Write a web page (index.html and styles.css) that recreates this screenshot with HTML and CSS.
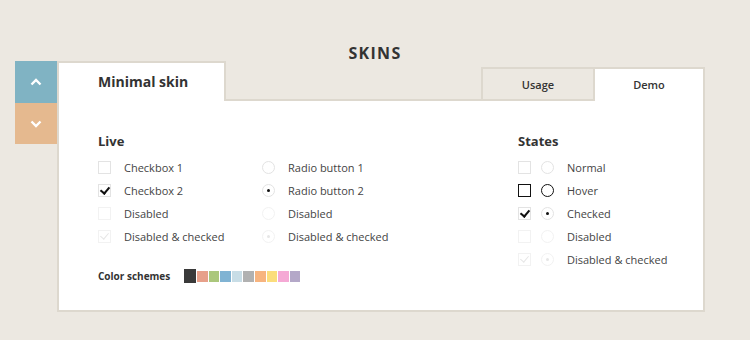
FILE: index.html
```html
<!DOCTYPE html>
<html lang="en">
<head>
    <meta charset="UTF-8">
    <title>Skins</title>
    <link rel="stylesheet" href="styles.css">
</head>
<body>
    <h1 class="title">SKINS</h1>

    <div class="wrap">
        <div class="side">
            <div class="side-btn up">
                <svg width="12" height="8" viewBox="0 0 12 8"><path d="M1.5 6.5 L6 2 L10.5 6.5" fill="none" stroke="#fff" stroke-width="2.4"/></svg>
            </div>
            <div class="side-btn down">
                <svg width="12" height="8" viewBox="0 0 12 8"><path d="M1.5 1.5 L6 6 L10.5 1.5" fill="none" stroke="#fff" stroke-width="2.4"/></svg>
            </div>
        </div>

        <div class="panel">
            <div class="tabs">
                <div class="skin-tab">Minimal skin</div>
                <div class="tab-gap"></div>
                <div class="tab usage">Usage</div>
                <div class="tab demo">Demo</div>
            </div>

            <div class="body">
                <div class="live">
                    <h3>Live</h3>
                    <div class="live-cols">
                        <ul class="list">
                            <li><span class="box"></span>Checkbox 1</li>
                            <li><span class="box checked"></span>Checkbox 2</li>
                            <li><span class="box disabled"></span>Disabled</li>
                            <li><span class="box disabled checked"></span>Disabled &amp; checked</li>
                        </ul>
                        <ul class="list">
                            <li><span class="radio"></span>Radio button 1</li>
                            <li><span class="radio checked"></span>Radio button 2</li>
                            <li><span class="radio disabled"></span>Disabled</li>
                            <li><span class="radio disabled checked"></span>Disabled &amp; checked</li>
                        </ul>
                    </div>
                    <div class="schemes">
                        <span class="schemes-label">Color schemes</span>
                        <div class="swatches">
                            <span class="swatch active" style="background:#3a3a3a"></span>
                            <span class="swatch" style="background:#e7a08a"></span>
                            <span class="swatch" style="background:#abc77c"></span>
                            <span class="swatch" style="background:#80b3d3"></span>
                            <span class="swatch" style="background:#c8dde6"></span>
                            <span class="swatch" style="background:#b1b1b1"></span>
                            <span class="swatch" style="background:#f7b47f"></span>
                            <span class="swatch" style="background:#fbdd7c"></span>
                            <span class="swatch" style="background:#f5a9d5"></span>
                            <span class="swatch" style="background:#b4a8c8"></span>
                        </div>
                    </div>
                </div>

                <div class="states">
                    <h3>States</h3>
                    <ul class="list">
                        <li><span class="box"></span><span class="radio"></span>Normal</li>
                        <li><span class="box hover"></span><span class="radio hover"></span>Hover</li>
                        <li><span class="box checked"></span><span class="radio checked"></span>Checked</li>
                        <li><span class="box disabled"></span><span class="radio disabled"></span>Disabled</li>
                        <li><span class="box disabled checked"></span><span class="radio disabled checked"></span>Disabled &amp; checked</li>
                    </ul>
                </div>
            </div>
        </div>
    </div>
</body>
</html>
```

FILE: styles.css
```css
:root {
    --bg: #ece8e1;
    --line: #ddd8ce;
    --text: #333;
    --label: #444;
}

body {
    margin: 0;
    background: var(--bg);
    font-family: "Open Sans", "Noto Sans", sans-serif;
    color: var(--text);
}

.title {
    margin: 0;
    padding-top: 46px;
    height: 15px;
    line-height: 15px;
    text-align: center;
    font-size: 16px;
    font-weight: 700;
    letter-spacing: 1.3px;
}

.wrap {
    display: flex;
    margin: 0 0 0 15px;
}

.side {
    display: flex;
    flex-direction: column;
    width: 42px;
}

.side-btn {
    display: flex;
    align-items: center;
    justify-content: center;
    height: 42px;
}

.side-btn.up {
    background: #80b3c3;
}

.side-btn.down {
    background: #e5b98f;
    height: 41px;
}

.panel {
    width: 648px;
    display: flex;
    flex-direction: column;
}

.tabs {
    display: flex;
    align-items: flex-end;
    height: 40px;
}

.skin-tab {
    width: 169px;
    height: 40px;
    padding-left: 39px;
    background: #fff;
    border: 2px solid var(--line);
    border-bottom: none;
    box-sizing: border-box;
    line-height: 38px;
    font-size: 14px;
    font-weight: 700;
}

.tab-gap {
    flex: 1;
    border-bottom: 2px solid var(--line);
}

.tab {
    width: 112px;
    height: 34px;
    box-sizing: border-box;
    text-align: center;
    font-size: 11px;
    font-weight: 600;
    line-height: 32px;
}

.usage {
    background: var(--bg);
    border: 2px solid var(--line);
    border-right: none;
}

.demo {
    background: #fff;
    border: 2px solid var(--line);
    border-bottom: none;
}

.body {
    display: flex;
    height: 211px;
    box-sizing: border-box;
    padding: 31px 0 0 39px;
    background: #fff;
    border: 2px solid var(--line);
    border-top: none;
}

h3 {
    margin: 0 0 6px;
    height: 18px;
    line-height: 18px;
    font-size: 13px;
    font-weight: 700;
}

.live {
    width: 420px;
}

.live-cols {
    display: flex;
}

.live-cols .list {
    width: 164px;
}

.list {
    list-style: none;
    margin: 0;
    padding: 0;
}

.list li {
    display: flex;
    align-items: center;
    height: 23px;
    font-size: 11px;
    color: var(--label);
}

.box,
.radio {
    position: relative;
    flex: none;
    width: 13px;
    height: 13px;
    box-sizing: border-box;
    border: 1px solid #e3e3e3;
    margin-right: 13px;
}

.radio {
    border-radius: 50%;
}

.states .box {
    margin-right: 10px;
}

.box.hover,
.radio.hover {
    border-color: #111;
}

.box.disabled,
.radio.disabled {
    border-color: #f2f2f2;
}

.box.checked::after {
    content: "";
    position: absolute;
    left: 3px;
    top: 0;
    width: 4px;
    height: 7px;
    border: solid #111;
    border-width: 0 2.5px 2.5px 0;
    transform: rotate(40deg);
}

.box.disabled.checked::after {
    border-color: #e6e6e6;
    border-width: 0 1.5px 1.5px 0;
}

.radio.checked::after {
    content: "";
    position: absolute;
    left: 4px;
    top: 4px;
    width: 3px;
    height: 3px;
    border-radius: 50%;
    background: #111;
}

.radio.disabled.checked::after {
    background: #e6e6e6;
}

.schemes {
    display: flex;
    align-items: center;
    margin-top: 21px;
}

.schemes-label {
    width: 86px;
    font-size: 10px;
    font-weight: 700;
}

.swatches {
    display: flex;
    align-items: center;
}

.swatch {
    width: 10.6px;
    height: 11px;
    margin-right: 1px;
}

.swatch.active {
    width: 12px;
    height: 14px;
}
```
